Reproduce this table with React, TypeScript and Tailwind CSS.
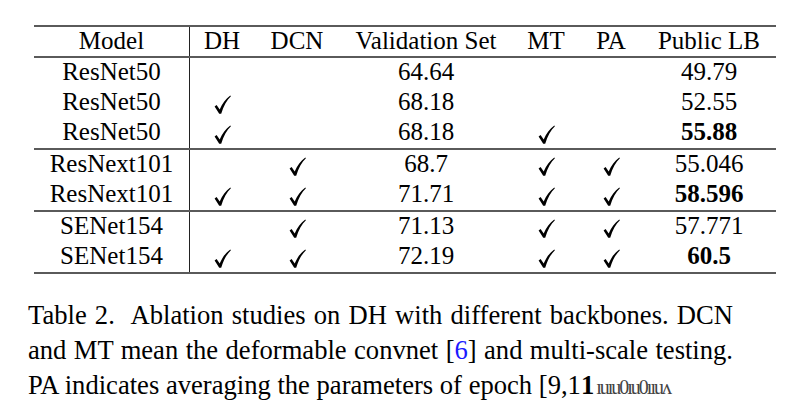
const serif = { fontFamily: '"Liberation Serif", "Times New Roman", serif' };

type Row = {
  model: string;
  dh?: boolean;
  dcn?: boolean;
  val: string;
  mt?: boolean;
  pa?: boolean;
  lb: string;
  bold?: boolean;
};

const groups: Row[][] = [
  [
    { model: "ResNet50", val: "64.64", lb: "49.79" },
    { model: "ResNet50", dh: true, val: "68.18", lb: "52.55" },
    { model: "ResNet50", dh: true, val: "68.18", mt: true, lb: "55.88", bold: true },
  ],
  [
    { model: "ResNext101", dcn: true, val: "68.7", mt: true, pa: true, lb: "55.046" },
    { model: "ResNext101", dh: true, dcn: true, val: "71.71", mt: true, pa: true, lb: "58.596", bold: true },
  ],
  [
    { model: "SENet154", dcn: true, val: "71.13", mt: true, pa: true, lb: "57.771" },
    { model: "SENet154", dh: true, dcn: true, val: "72.19", mt: true, pa: true, lb: "60.5", bold: true },
  ],
];

function Check() {
  return (
    <svg width="17" height="19" viewBox="0 0 17 19" className="mt-[5px]">
      <path
        d="M0.6 11.4 L2.6 10 L5.7 14.6 C8.2 8.4 11.8 3.6 16.3 0.4 L16.9 1.2 C12.8 5.2 9.6 10.8 7.2 18.7 L5.2 18.7 Z"
        fill="#000"
      />
    </svg>
  );
}

function Rule() {
  return <div className="h-[2px] w-full bg-[#5a5a5a]" />;
}

const cols = "grid grid-cols-[156px_64px_86px_172px_68px_62px_134px]";

function Cell({ children, first }: { children?: React.ReactNode; first?: boolean }) {
  return (
    <div
      className={
        first
          ? "flex items-center justify-center border-r-[1.5px] border-[#222] pb-[3px]"
          : "flex items-center justify-center pb-[3px]"
      }
    >
      {children}
    </div>
  );
}

function DataRow({ row }: { row: Row }) {
  return (
    <div className={`${cols} h-[30px]`}>
      <Cell first>{row.model}</Cell>
      <Cell>{row.dh && <Check />}</Cell>
      <Cell>{row.dcn && <Check />}</Cell>
      <Cell>{row.val}</Cell>
      <Cell>{row.mt && <Check />}</Cell>
      <Cell>{row.pa && <Check />}</Cell>
      <Cell>
        <span className={row.bold ? "font-bold" : ""}>{row.lb}</span>
      </Cell>
    </div>
  );
}

export default function App() {
  return (
    <div className="h-[403px] w-[786px] bg-white text-black" style={serif}>
      <div className="pt-[25px] pl-[34px] text-[25px] leading-none">
        <div className="w-[742px]">
          <Rule />
          <div className={`${cols} h-[29px]`}>
            <Cell first>Model</Cell>
            <Cell>DH</Cell>
            <Cell>DCN</Cell>
            <Cell>Validation Set</Cell>
            <Cell>MT</Cell>
            <Cell>PA</Cell>
            <Cell>Public LB</Cell>
          </div>
          <Rule />
          {groups.map((g, i) => (
            <div key={i}>
              {g.map((r, j) => (
                <DataRow row={r} key={j} />
              ))}
              <Rule />
            </div>
          ))}
        </div>
      </div>

      <div className="mt-[24px] ml-[28px] w-[705px] text-[26.6px] leading-[35px]">
        <div className="text-justify [text-align-last:justify]">
          <span className="mr-[9px]">Table 2.</span> Ablation studies on DH with different backbones. DCN
        </div>
        <div className="text-justify [text-align-last:justify]">
          and MT mean the deformable convnet [<span className="text-[#1a1aff]">6</span>] and multi-scale testing.
        </div>
        <div className="flex items-baseline whitespace-nowrap">
          <span>PA indicates averaging the parameters of epoch [9,1</span>
          <span className="font-bold">1</span>
          <span className="ml-[2px] text-[20px] tracking-[-2px] text-[#444]">ıuıu0ıu0ııuʌ</span>
        </div>
      </div>
    </div>
  );
}
